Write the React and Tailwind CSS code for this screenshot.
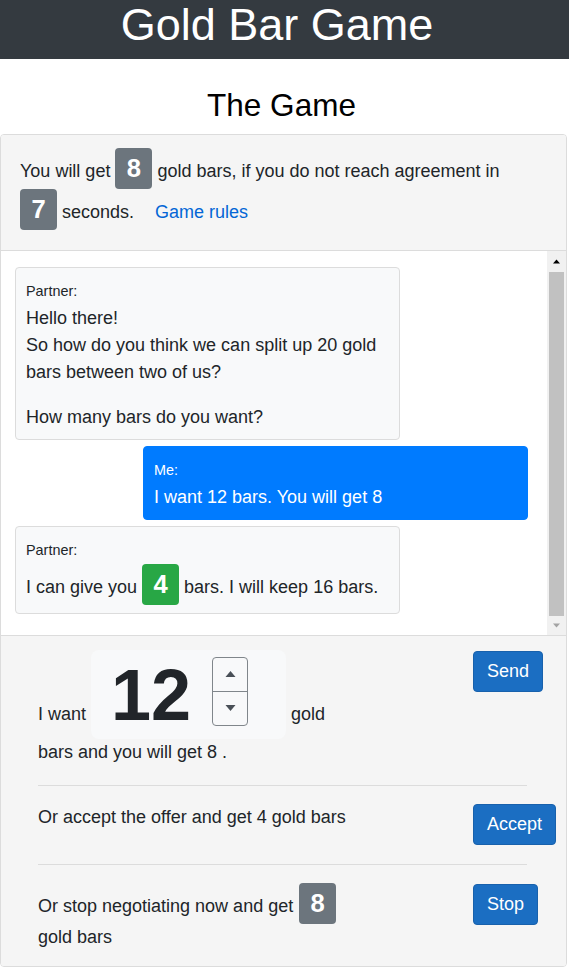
const Badge = ({ value, color = 'bg-[#6c757d]' }) => (
  <span className={`inline-flex h-[41px] w-[37px] shrink-0 items-center justify-center rounded-[4px] ${color} text-[25.6px] font-bold leading-none text-white`}>
    {value}
  </span>
);

const Bubble = ({ who, mine, children }) => (
  <div
    className={`w-[385px] rounded-[4px] border px-[10px] pb-[8px] pt-[9px] ${
      mine ? 'ml-auto mr-[19px] border-[#007bff] bg-[#007bff] text-white' : 'ml-[14px] border-[#dcdcdc] bg-[#f8f9fa] text-[#212529]'
    }`}
  >
    <div className="leading-[27px]">
      <span className="text-[14.4px]">{who}:</span>
    </div>
    {children}
  </div>
);

const Triangle = ({ up, color, w = 7, h = 5 }) => (
  <svg width={w} height={h} viewBox="0 0 10 6">
    <polygon points={up ? '0,6 5,0 10,6' : '0,0 10,0 5,6'} fill={color} />
  </svg>
);

const Button = ({ children }) => (
  <button className="rounded-[4px] border border-[#1861ac] bg-[#1b6ec2] px-[13px] py-[6px] text-[18px] leading-[27px] text-white">
    {children}
  </button>
);

const Divider = () => <div className="mb-[18px] ml-[37px] mt-[19px] h-px w-[489px] bg-[#dcdcdc]" />;

export default function App() {
  return (
    <div className="min-h-screen w-[569px] bg-white text-[18px] leading-[27px] text-[#212529]" style={{ fontFamily: '"Liberation Sans", Arial, sans-serif' }}>
      <header className="h-[59px] bg-[#343a40]">
        <h1 className="pr-[15px] text-center text-[45px] leading-[50px] text-white">Gold Bar Game</h1>
      </header>

      <h3 className="mb-[10px] mt-[27px] pr-[6px] text-center text-[31.5px] leading-[38px] text-black">The Game</h3>

      <div className="w-[567px] overflow-hidden rounded-[4px] border border-[#dcdcdc]">
        {/* status */}
        <div className="border-b border-[#dcdcdc] bg-[#f5f5f5] pb-[20px] pl-[19px] pt-[13px]">
          <div className="flex items-baseline">
            <span>You will get</span>
            <span className="mx-[5px]"><Badge value="8" /></span>
            <span>gold bars, if you do not reach agreement in</span>
          </div>
          <div className="flex items-baseline">
            <Badge value="7" />
            <span className="ml-[5px]">seconds.</span>
            <a href="#" className="ml-[21px] text-[#0366d6]">Game rules</a>
          </div>
        </div>

        {/* chat */}
        <div className="flex h-[385px] border-b border-[#dcdcdc] bg-white">
          <div className="flex flex-1 flex-col gap-[6px] overflow-hidden pt-[16px]">
            <Bubble who="Partner">
              <p>
                Hello there!
                <br />
                So how do you think we can split up 20 gold bars between two of us?
              </p>
              <p className="mt-[18px]">How many bars do you want?</p>
            </Bubble>
            <Bubble who="Me" mine>
              <div>I want 12 bars. You will get 8</div>
            </Bubble>
            <Bubble who="Partner">
              <div className="flex items-baseline">
                <span>I can give you</span>
                <span className="mx-[5px]"><Badge value="4" color="bg-[#28a745]" /></span>
                <span>bars. I will keep 16 bars.</span>
              </div>
            </Bubble>
          </div>
          <div className="flex w-[19px] flex-col bg-[#f1f1f1]">
            <div className="flex h-[21px] items-center justify-center">
              <Triangle up color="#000" />
            </div>
            <div className="mx-[2px] flex-1 bg-[#c1c1c1]" />
            <div className="flex h-[19px] items-center justify-center">
              <Triangle color="#a3a3a3" />
            </div>
          </div>
        </div>

        {/* actions */}
        <div className="bg-[#f5f5f5] pb-[15px] pt-[14px]">
          <div className="flex">
            <div className="flex-1 pl-[37px]">
              <div className="flex items-baseline">
                <span>I want</span>
                <div className="mx-[5px] flex h-[89px] w-[195px] items-center rounded-[8px] bg-[#f8f9fa] pl-[20px]">
                  <span className="text-[72px] font-bold leading-none text-[#212529]">12</span>
                  <div className="ml-[21px] mt-[-7px] flex h-[69px] w-[36px] flex-col overflow-hidden rounded-[4px] border border-[#80868b]">
                    <div className="flex flex-1 items-center justify-center border-b border-[#80868b]">
                      <Triangle up color="#495057" w={11} h={6} />
                    </div>
                    <div className="flex flex-1 items-center justify-center">
                      <Triangle color="#495057" w={11} h={6} />
                    </div>
                  </div>
                </div>
                <span>gold</span>
              </div>
              <div>bars and you will get 8 .</div>
            </div>
            <div className="w-[93px] pt-px">
              <Button>Send</Button>
            </div>
          </div>

          <Divider />

          <div className="flex">
            <div className="flex-1 pl-[37px]">Or accept the offer and get 4 gold bars</div>
            <div className="w-[93px]">
              <Button>Accept</Button>
            </div>
          </div>

          <Divider />

          <div className="flex">
            <div className="flex-1 pl-[37px]">
              <div className="flex items-baseline">
                <span>Or stop negotiating now and get</span>
                <span className="ml-[6px]"><Badge value="8" /></span>
              </div>
              <div>gold bars</div>
            </div>
            <div className="w-[93px] pt-px">
              <Button>Stop</Button>
            </div>
          </div>
        </div>
      </div>
    </div>
  );
}
